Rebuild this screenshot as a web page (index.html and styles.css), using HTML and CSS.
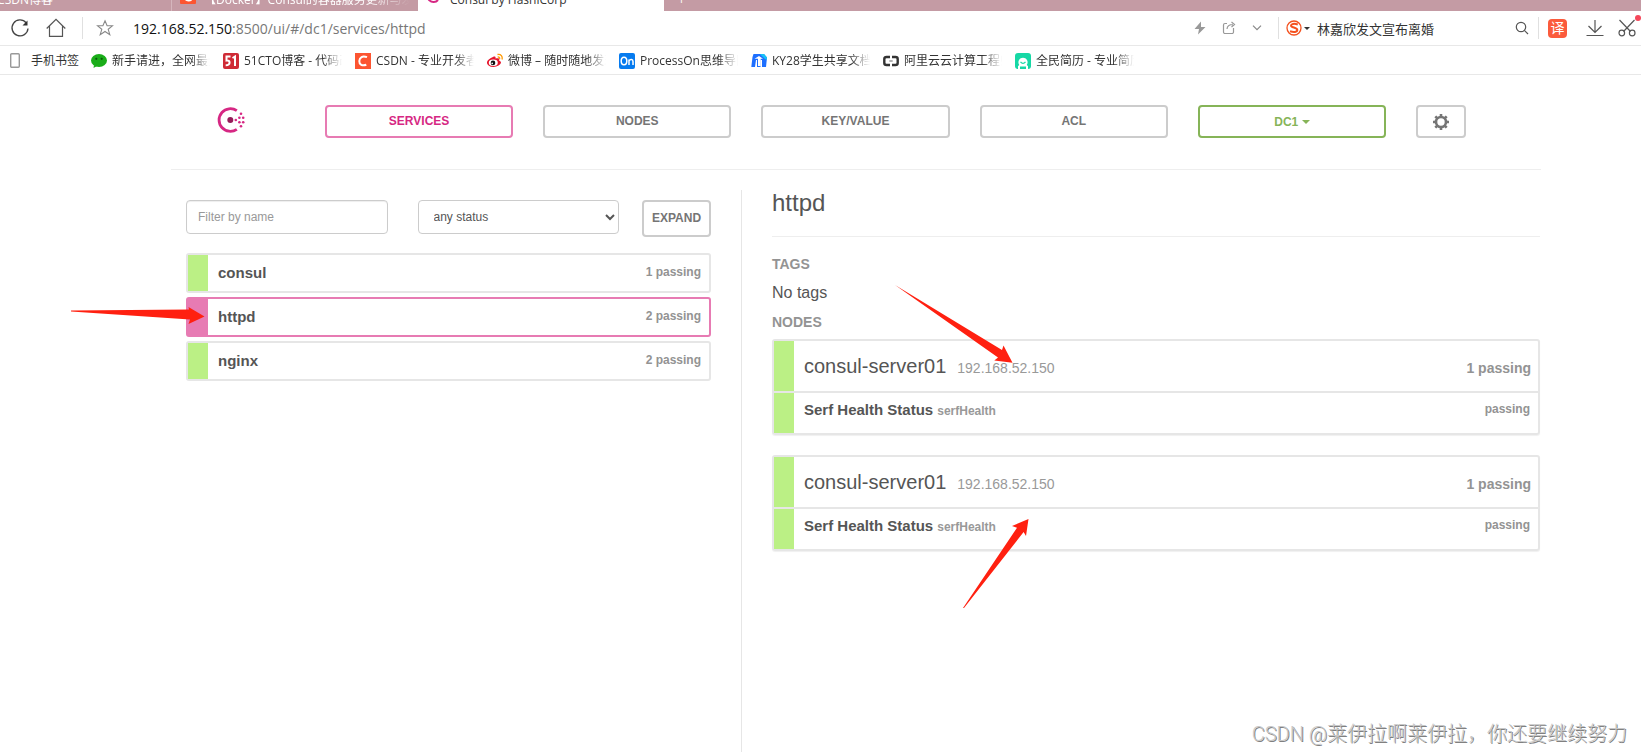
FILE: index.html
```
<!DOCTYPE html>
<html lang="zh-CN">
<head>
<meta charset="utf-8">
<title>Consul by HashiCorp</title>
<link rel="stylesheet" href="styles.css">
</head>
<body>
<header class="browser">
  <div class="tabs">
    <div class="tab tab-first"><span class="tab-title">主页-CSDN博客</span></div>
    <div class="tab tab-second"><svg class="tab-icon" viewBox="0 0 16 16"><rect width="16" height="16" rx="1" fill="#fc5531"/><path d="M11.500 4.500A4.500 4.500 0 1 0 11.500 11.500" fill="none" stroke="#fff" stroke-width="2"/></svg><span class="tab-title fade">【Docker】Consul的容器服务更新与发现</span></div>
    <div class="tab tab-active"><svg class="tab-icon" viewBox="0 0 16 16"><path d="M12 4A6 6 0 1 0 12 12" fill="none" stroke="#d62783" stroke-width="2"/></svg><span class="tab-title">Consul by HashiCorp</span></div>
    <div class="tab tab-new"><span class="tab-title">+</span></div>
  </div>
  <div class="toolbar">
    <button class="tool" aria-label="刷新"><svg width="20" height="20" viewBox="0 0 20 20" fill="none" stroke="#444" stroke-width="1.300"><path d="M16.200 4.800A8 8 0 1 0 18 10.500"/><path d="M12.500 7.500h5v-5z" fill="#333" stroke="none"/></svg></button>
    <button class="tool" aria-label="主页"><svg width="20" height="20" viewBox="0 0 20 20" fill="none" stroke="#555" stroke-width="1.200"><path d="M.7 10.500L10 1.300l9.300 9.200M3.500 8v10.400h13V8"/></svg></button>
    <span class="divider"></span>
    <button class="tool" aria-label="收藏"><svg width="18" height="18" viewBox="0 0 18 18" fill="none" stroke="#888" stroke-width="1.100"><path d="M9 1.800l2.100 5h5.300l-4.200 3.500 1.600 5.400L9 12.500l-4.800 3.200 1.600-5.400L1.600 6.800h5.300z"/></svg></button>
    <span class="url"><b>192.168.52.150</b>:8500/ui/#/dc1/services/httpd</span>
    <button class="tool" aria-label="加速"><svg width="12" height="14" viewBox="0 0 12 14"><path d="M7 .5L.5 8H5l-1 5.500L11.500 6H7z" fill="#999"/></svg></button>
    <button class="tool" aria-label="分享"><svg width="14" height="14" viewBox="0 0 14 14" fill="none" stroke="#999" stroke-width="1.200"><path d="M5 2.500H3a1.500 1.500 0 0 0-1.500 1.500v7A1.500 1.500 0 0 0 3 12.500h7a1.500 1.500 0 0 0 1.500-1.500V7M5 8c.2-3 2-4.500 6-4.500M9.500 1l3 2.500-3 2.500"/></svg></button>
    <button class="tool" aria-label="更多"><svg width="10" height="6" viewBox="0 0 10 6" fill="none" stroke="#888" stroke-width="1.200"><path d="M1 .7l4 4 4-4"/></svg></button>
    <span class="divider divider-search"></span>
    <button class="engine" aria-label="搜索引擎"><svg width="16" height="16" viewBox="0 0 16 16" fill="none" stroke="#f4511e"><circle cx="8" cy="8" r="7" stroke-width="1.300"/><path d="M11.800 4.500C8 3.300 5 3.800 5 5.800s6.300 1.600 6.300 4.200c0 2.200-3.500 2.600-7.300 1.300" stroke-width="2"/></svg><span class="caret"></span></button>
    <span class="hot">林嘉欣发文宣布离婚</span>
    <button class="tool" aria-label="搜索"><svg width="14" height="14" viewBox="0 0 14 14" fill="none" stroke="#555" stroke-width="1.200"><circle cx="6" cy="6" r="4.700"/><path d="M9.300 9.300L13 13"/></svg></button>
    <span class="divider divider-tools"></span>
    <button class="translate">译</button>
    <button class="tool download" aria-label="下载"><svg width="18" height="18" viewBox="0 0 18 18" fill="none" stroke="#555" stroke-width="1.200"><path d="M9 1v12.500M2.500 7L9 13.500 15.500 7M.5 16.500h17"/></svg></button>
    <button class="tool scissors" aria-label="截图"><svg width="18" height="18" viewBox="0 0 18 18" fill="none" stroke="#555" stroke-width="1.200"><path d="M1.500 1l11 11.500M16.500 1l-11 11.500"/><circle cx="3.800" cy="14" r="2.800"/><circle cx="14.200" cy="14" r="2.800"/></svg><span class="alert"></span></button>
  </div>
  <nav class="bookmarks">
    <a class="bookmark bookmark-phone" href="#"><svg width="10" height="15" viewBox="0 0 10 15"><rect x=".7" y=".7" width="8.600" height="13.600" rx="1" fill="#fff" stroke="#999" stroke-width="1.400"/></svg><span>手机书签</span></a>
    <a class="bookmark" href="#"><svg width="16" height="16" viewBox="0 0 16 16"><ellipse cx="8" cy="7.500" rx="8" ry="6.500" fill="#1aad19"/><path d="M3 12l-.5 3L6 13z" fill="#1aad19"/><circle cx="5.300" cy="5.800" r="1.100" fill="#0a5a0a"/><circle cx="10.700" cy="5.800" r="1.100" fill="#0a5a0a"/></svg><span class="fade">新手请进，全网最全</span></a>
    <a class="bookmark" href="#"><svg width="16" height="16" viewBox="0 0 16 16"><rect width="16" height="16" rx="2" fill="#cf2b36"/><path d="M7.500 3.500H3.500v4c4-1 4.500 5-.8 4.800M9.500 5l2.500-1.500V13" fill="none" stroke="#fff" stroke-width="2"/></svg><span class="fade">51CTO博客 - 代码改变</span></a>
    <a class="bookmark" href="#"><svg width="16" height="16" viewBox="0 0 16 16"><rect width="16" height="16" fill="#fc5531"/><path d="M12 4.200C7.500 2.200 4.500 4.500 4.300 8s3 5.300 7 3.800" fill="none" stroke="#fff" stroke-width="2"/></svg><span class="fade">CSDN - 专业开发者社</span></a>
    <a class="bookmark" href="#"><svg width="16" height="16" viewBox="0 0 16 16"><path d="M6 4c2-1 3 0 2.500 1.500C12 4.500 13 6 12 7.500c5 2-.5 6.500-5.500 6.500S-.5 11 0 9c.5-1.700 3-4.200 6-5z" fill="#e6162d"/><ellipse cx="6.300" cy="9.800" rx="4.500" ry="3.200" fill="#fff"/><circle cx="6" cy="9.900" r="2.300" fill="#111"/><circle cx="5.200" cy="10.400" r=".8" fill="#fff"/><path d="M10.500 1.500c3.500-.6 5.300 2 4.500 5M10.700 4c1.500-.2 2.200.8 1.900 2" fill="none" stroke="#f90" stroke-width="1.300"/></svg><span class="fade">微博 – 随时随地发现</span></a>
    <a class="bookmark" href="#"><svg width="16" height="16" viewBox="0 0 16 16"><rect width="16" height="16" rx="2" fill="#067bef"/><ellipse cx="5" cy="8" rx="2.800" ry="3.800" fill="none" stroke="#fff" stroke-width="1.500"/><path d="M10 12V6.500M10 8c1-2 4-2 4 .5V12" fill="none" stroke="#fff" stroke-width="1.500"/></svg><span class="fade">ProcessOn思维导图</span></a>
    <a class="bookmark" href="#"><svg width="16" height="16" viewBox="0 0 16 16"><path d="M2.500 1h10.500L16 4.500 15 14h-4V7H9.500v7H6V7H5L4 14H.3L1.500 4z" fill="#1e6fff"/><path d="M9 1h4L16 4.500l-.2 2.500C13.500 6 12 4 9 1z" fill="#16c3f5"/><path d="M3.500 5.800L8 3l4 2.800H9.700V13H7V5.800z" fill="#fff"/></svg><span class="fade">KY28学生共享文档记录</span></a>
    <a class="bookmark" href="#"><svg width="16" height="16" viewBox="0 0 16 16" fill="none" stroke="#333" stroke-width="2.400"><path d="M7 4H3.500Q1.300 4 1.300 6v4q0 2 2.200 2H7M9 4h3.500q2.200 0 2.200 2v4q0 2-2.200 2H9"/><path d="M6.300 8h3.400" stroke="#999" stroke-width="1.500"/></svg><span class="fade">阿里云云计算工程师班</span></a>
    <a class="bookmark" href="#"><svg width="16" height="16" viewBox="0 0 16 16"><rect width="16" height="16" rx="3" fill="#16d8a5"/><path d="M3 16v-3Q4.500 12.500 4 11.500a4.600 4.600 0 1 1 8 0q-.5 1 1 1.500v3h-2v-2.500H5V16z" fill="#fff"/><path d="M5.500 8.800q2.500 3 5 0" fill="none" stroke="#16d8a5" stroke-width="1.300"/></svg><span class="fade">全民简历 - 专业简历</span></a>
  </nav>
</header>

<main class="app">
  <nav class="nav">
    <a class="logo" href="#" aria-label="Consul"><svg width="28" height="28" viewBox="0 0 28 28"><path d="M19.800 4.700A11.300 11.300 0 1 0 19.800 23.300" fill="none" stroke="#d62783" stroke-width="2.800"/><circle cx="13.300" cy="14" r="3" fill="#961d59"/><g fill="#d62783"><circle cx="18.800" cy="14" r="1.300"/><circle cx="22.400" cy="11.800" r="1.300"/><circle cx="22.400" cy="16.200" r="1.300"/><circle cx="24" cy="7.700" r="1.300"/><circle cx="26.200" cy="11.800" r="1.300"/><circle cx="26.200" cy="16.200" r="1.300"/><circle cx="24" cy="20.300" r="1.300"/></g></svg></a>
    <a class="btn btn-active" href="#">SERVICES</a>
    <a class="btn" href="#">NODES</a>
    <a class="btn" href="#">KEY/VALUE</a>
    <a class="btn" href="#">ACL</a>
    <button class="btn btn-dc">DC1 <span class="caret"></span></button>
    <button class="btn btn-gear" aria-label="Settings"><svg width="16" height="16" viewBox="0 0 16 16" fill="none" stroke="#757575"><circle cx="8" cy="8" r="5" stroke-width="2.600"/><path d="M8 0v3M8 13v3M0 8h3M13 8h3M2.300 2.300l2.200 2.200M11.500 11.500l2.200 2.200M13.700 2.300l-2.200 2.200M4.500 11.500l-2.200 2.200" stroke-width="2.600"/></svg></button>
  </nav>
  <div class="columns">
    <section class="services">
      <form class="filters">
        <div class="fields">
          <input class="field" type="text" placeholder="Filter by name" aria-label="Filter by name">
          <select class="field" aria-label="Status"><option>any status</option><option>passing</option><option>failing</option></select>
        </div>
        <button class="btn btn-expand" type="button">EXPAND</button>
      </form>
      <div class="list">
        <a class="service" href="#"><span class="name">consul</span><span class="count">1 passing</span></a>
        <a class="service service-active" href="#"><span class="name">httpd</span><span class="count">2 passing</span><svg class="arrow arrow-service" width="140" height="22" viewBox="68 304 140 22"><path d="M71 310.500L189 309.500 188.500 307 204.500 316.500 188.500 324 190 319.500 71 311.500z"/></svg></a>
        <a class="service" href="#"><span class="name">nginx</span><span class="count">2 passing</span></a>
      </div>
    </section>
    <section class="detail">
      <h1>httpd</h1>
      <h2>TAGS</h2>
      <p>No tags</p>
      <h2>NODES</h2>
      <article class="node">
        <div class="node-row node-head"><span class="host">consul-server01</span><span class="ip">192.168.52.150</span><span class="state">1 passing</span></div>
        <div class="node-row node-check"><span class="name">Serf Health Status</span><span class="check-id">serfHealth</span><span class="count">passing</span></div>
        <svg class="arrow arrow-first" width="120" height="80" viewBox="894 284 120 80"><path d="M895 285L1002 350 1003.500 345.500 1012.500 362.700 994.300 360.500 998 357.500z"/></svg>
      </article>
      <article class="node">
        <div class="node-row node-head"><span class="host">consul-server01</span><span class="ip">192.168.52.150</span><span class="state">1 passing</span></div>
        <div class="node-row node-check"><span class="name">Serf Health Status</span><span class="check-id">serfHealth</span><span class="count">passing</span></div>
        <svg class="arrow arrow-second" width="70" height="90" viewBox="960 518 70 90"><path d="M963 608L1017 527.700 1012 526 1028.500 519 1026 536 1023.600 532 964 608z"/></svg>
      </article>
    </section>
  </div>
</main>
<div class="watermark">CSDN @莱伊拉啊莱伊拉，你还要继续努力</div>
</body>
</html>
```
FILE: styles.css
```
* { box-sizing: border-box; }
body {
  margin: 0;
  min-height: 100vh;
  display: flex;
  flex-direction: column;
  position: relative;
  background: #fff;
  color: #555;
  font-family: "Liberation Sans", Arial, sans-serif;
}
a { color: inherit; text-decoration: none; }
button { font: inherit; color: inherit; background: none; border: 0; padding: 0; }
svg { display: block; flex: none; }

/* Browser chrome */
.browser { font-family: "Open Sans", "Noto Sans CJK SC", sans-serif; font-size: 12px; color: #333; }
.tabs { display: flex; align-items: flex-end; height: 11px; overflow: hidden; background: #c49ba4; color: #fff; }
.tab { display: flex; align-items: flex-end; gap: 8px; height: 32px; flex: none; padding: 0 8px 3px; white-space: nowrap; }
.tab-title { line-height: 16px; }
.tab-icon { width: 16px; height: 16px; margin-bottom: 4px; }
.tab-first { width: 172px; justify-content: flex-end; padding-right: 118px; border-right: 1px solid #d5b6bd; }
.tab-second { width: 246px; }
.tab-active { width: 246px; background: #fff; color: #333; }
.tab-new { padding-left: 14px; }
.fade {
  overflow: hidden;
  white-space: nowrap;
  -webkit-mask-image: linear-gradient(to right, #000 80%, transparent);
  mask-image: linear-gradient(to right, #000 80%, transparent);
}
.toolbar { display: flex; align-items: center; height: 35px; padding: 0 5px 0 10px; border-bottom: 1px solid #e8e8e8; }
.tool { margin-right: 16px; }
.divider { width: 1px; height: 22px; background: #e0e0e0; margin-right: 13px; }
.url { flex: 1; margin-left: 3px; font-size: 14px; color: #777; white-space: nowrap; }
.url b { font-weight: 400; color: #111; }
.divider-search { margin: 0 7px 0 0; }
.caret { display: inline-block; border: 4px solid transparent; border-top-color: currentColor; border-bottom: 0; vertical-align: middle; }
.engine { display: flex; align-items: center; gap: 2px; margin-right: 7px; }
.engine .caret { border-width: 3px; border-bottom: 0; }
.hot { width: 198px; font-size: 13px; }
.toolbar .divider-tools { margin: 0 9px 0 -7px; }
.translate { width: 19px; height: 19px; margin-right: 19px; border-radius: 4px; background: #fb5b3c; color: #fff; font-size: 14px; line-height: 18px; }
.download { margin-right: 14px; }
.scissors { position: relative; margin: 0; }
.alert { position: absolute; top: -4px; right: -5px; width: 6px; height: 6px; border-radius: 50%; background: #f5475a; }
.bookmarks { display: flex; align-items: center; height: 29px; border-bottom: 1px solid #e8e8e8; padding: 1px 0 0 10px; }
.bookmark { display: flex; align-items: center; gap: 5px; width: 132px; padding-right: 13px; line-height: 18px; }
.bookmark-phone { width: 81px; padding: 0; gap: 11px; }

/* Consul */
.app { flex: 1; display: flex; flex-direction: column; padding: 30px 100px 0 171px; }
.nav { display: flex; gap: 30px; padding: 0 75px 31px 46px; border-bottom: 1px solid #eee; }
.logo { width: 78px; padding-top: 1px; }
.btn {
  flex: 1;
  height: 33px;
  border: 2px solid #ccc;
  border-radius: 4px;
  color: #757575;
  font-size: 12px;
  font-weight: 700;
  line-height: 28px;
  text-align: center;
}
.btn-active { border-color: #e77bb3; color: #d62783; }
.btn-dc { border-color: #86b458; color: #86b458; }
.btn-gear { flex: none; display: grid; place-items: center; width: 50px; }
.columns { flex: 1; display: grid; grid-template-columns: 57fr 80fr; padding-top: 20px; }
.services { padding: 10px 30px 0 15px; }
.filters { display: flex; gap: 23px; }
.fields { flex: 1; display: grid; grid-template-columns: 1fr 1fr; gap: 30px; }
.field {
  width: 100%;
  height: 34px;
  padding: 0 11px;
  border: 1px solid #ccc;
  border-radius: 4px;
  background: #fff;
  color: #555;
  font-family: inherit;
  font-size: 12px;
  box-shadow: inset 0 1px 1px #eee;
}
select.field { box-shadow: none; }
.field::placeholder { color: #999; }
.btn-expand { flex: none; width: 69px; height: 37px; line-height: 33px; }
.list { display: grid; gap: 4px; margin-top: 16px; }
.service {
  position: relative;
  display: flex;
  justify-content: space-between;
  height: 40px;
  padding: 9px 8px 0 0;
  border: 2px solid #e6e6e6;
  border-radius: 3px;
  line-height: 18px;
}
.service::before, .node-row::before { content: ""; width: 20px; background: #bbf085; }
.service::before { margin: -9px 10px 0 0; }
.service .name { flex: 1; }
.service-active { border-color: #e77bb3; }
.service-active::before { background: #e77bb3; }
.name { font-size: 15px; font-weight: 700; color: #555; }
.count { font-size: 12px; font-weight: 700; color: #939393; line-height: 16px; }
.detail { border-left: 1px solid #e6e6e6; padding: 0 1px 0 30px; }
h1 { margin: 0; height: 47px; border-bottom: 1px solid #eee; font-size: 24px; font-weight: 400; line-height: 26px; }
h2 { margin: 0; font-size: 14px; color: #939393; line-height: 18px; }
h1 + h2 { margin-top: 18px; }
p { margin: 10px 0; font-size: 16px; line-height: 20px; }
.node { position: relative; margin: 8px 0 20px; border: 2px solid #e6e6e6; border-radius: 3px; box-shadow: 0 1px 1px #f0f0f0; }
.node-row { display: flex; align-items: baseline; padding-right: 7px; }
.node-row::before { align-self: stretch; margin-right: 10px; }
.node-head { height: 52px; line-height: 50px; border-bottom: 2px solid #e6e6e6; }
.node-check { height: 40px; line-height: 34px; }
.host { font-size: 20px; margin-right: 11px; }
.ip { flex: 1; font-size: 14px; color: #999; }
.state { font-size: 14px; font-weight: 700; color: #939393; }
.check-id { flex: 1; margin-left: 4px; font-size: 12px; font-weight: 700; color: #999; }
.node-check .count { align-self: flex-start; line-height: 32px; padding-right: 1px; }

/* Annotations over the page */
.arrow { position: absolute; fill: #ff2010; }
.arrow-service { left: -120px; top: 5px; }
.arrow-first { left: 120px; top: -57px; }
.arrow-second { left: 186px; top: 61px; }
.watermark {
  position: absolute;
  right: 14px;
  bottom: 3px;
  font: 300 20px/30px Roboto, "Noto Sans CJK TC", sans-serif;
  color: #c8c8c8;
  text-shadow: 1px 1px 0 #808080;
  white-space: nowrap;
}
```
